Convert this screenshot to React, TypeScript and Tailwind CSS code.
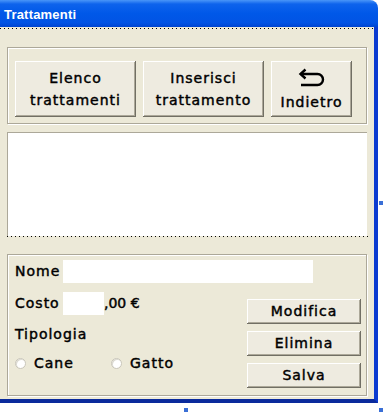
import React from "react";

const btn =
  "bg-[#EEEBE0] shadow-[inset_-1px_-1px_#716F64,inset_1px_1px_#FFFFFF,inset_-2px_-2px_#ACA899] text-black";

function Radio({ label }: { label: string }) {
  return (
    <div className="flex items-center">
      <span className="w-[11px] h-[11px] rounded-full bg-white border border-[#C9C6BA] shadow-[inset_1px_1px_#DDDBD2]" />
      <span className="ml-[8px]">{label}</span>
    </div>
  );
}

export default function App() {
  return (
    <div
      className="relative w-[388px] h-[418px] bg-white overflow-hidden"
      style={{ fontFamily: '"DejaVu Sans", sans-serif' }}
    >
      <div className="w-[378px] flex flex-col rounded-tr-[8px] overflow-hidden">
        <div className="h-[27px] bg-[linear-gradient(180deg,#4A96F8_0%,#0E63EC_15%,#0058E8_50%,#0153E4_85%,#0045D0_100%)] flex items-center pl-[4px]">
          <span
            className="text-white font-bold text-[13px] leading-none pt-[1px] tracking-[0.2px]"
            style={{ fontFamily: '"Liberation Sans", sans-serif' }}
          >
            Trattamenti
          </span>
        </div>
        <div className="h-[376px] bg-[#ECE9D8] border-r-4 border-b-4 border-r-[#0B3BD0] border-b-[#0A2A9C] flex flex-col text-[14px] font-normal tracking-[1px] [-webkit-text-stroke:0.45px_#000]">
          <div className="mt-[1px] h-[1px] w-full bg-[repeating-linear-gradient(90deg,#000_0_1px,transparent_1px_4px)]" />
          {/* group 1 */}
          <div className="mt-[18px] ml-[7px] w-[360px] h-[77px] border border-[#ACA899] shadow-[inset_1px_1px_#FFFFFF,1px_1px_#FFFFFF] flex gap-[7px] pl-[7px] pt-[13px]">
            <div className={`${btn} w-[121px] h-[56px] flex flex-col items-center justify-center leading-[22px]`}>
              <span>Elenco</span>
              <span>trattamenti</span>
            </div>
            <div className={`${btn} w-[121px] h-[56px] flex flex-col items-center justify-center leading-[22px]`}>
              <span>Inserisci</span>
              <span>trattamento</span>
            </div>
            <div className={`${btn} w-[81px] h-[56px] flex flex-col items-center pt-[7px]`}>
              <svg width="27" height="19" viewBox="0 0 27 19" fill="none" stroke="#000" strokeWidth="2.4" strokeLinejoin="miter">
                <path d="M7.5 1.5 L2.5 6 L7.5 10.5" />
                <path d="M2.5 6 H19.5 A5.5 5.5 0 0 1 19.5 17 H3" />
              </svg>
              <span className="mt-[7px] leading-[17px]">Indietro</span>
            </div>
          </div>
          {/* list */}
          <div className="mt-[8px] ml-[7px] w-[360px] h-[104px] bg-white border-t border-l border-[#ACA899]" />
          <div className="ml-[7px] w-[361px] h-[1px] bg-[repeating-linear-gradient(90deg,#000_0_1px,transparent_1px_4px)]" />
          {/* group 2 */}
          <div className="mt-[17px] ml-[7px] w-[360px] h-[142px] border border-[#ACA899] shadow-[inset_1px_1px_#FFFFFF,1px_1px_#FFFFFF] flex flex-col">
            <div className="mt-[5px] pl-[7px] flex items-center h-[23px]">
              <span className="w-[48px]">Nome</span>
              <div className="w-[250px] h-[23px] bg-white" />
            </div>
            <div className="mt-[9px] flex">
              <div className="pl-[7px] flex flex-col flex-1">
                <div className="flex items-center h-[23px]">
                  <span className="w-[48px]">Costo</span>
                  <div className="w-[41px] h-[23px] bg-white" />
                  <span className="tracking-[0px]">,00 €</span>
                </div>
                <div className="mt-[10px] leading-[18px]">Tipologia</div>
                <div className="mt-[11px] h-[18px] flex items-center leading-[18px]">
                  <div className="w-[96px]">
                    <Radio label="Cane" />
                  </div>
                  <Radio label="Gatto" />
                </div>
              </div>
              <div className="mt-[7px] mr-[5px] flex flex-col gap-[7px]">
                <div className={`${btn} w-[114px] h-[25px] flex items-center justify-center`}>Modifica</div>
                <div className={`${btn} w-[114px] h-[25px] flex items-center justify-center`}>Elimina</div>
                <div className={`${btn} w-[114px] h-[25px] flex items-center justify-center`}>Salva</div>
              </div>
            </div>
          </div>
        </div>
      </div>
      {/* selection handles */}
      <div className="absolute left-[379px] top-[201px] w-[4px] h-[4px] bg-[#3A6FD6]" />
      <div className="absolute left-[184px] top-[408px] w-[4px] h-[4px] bg-[#3A6FD6]" />
      <div className="absolute left-[379px] top-[408px] w-[4px] h-[4px] bg-[#3A6FD6]" />
    </div>
  );
}
